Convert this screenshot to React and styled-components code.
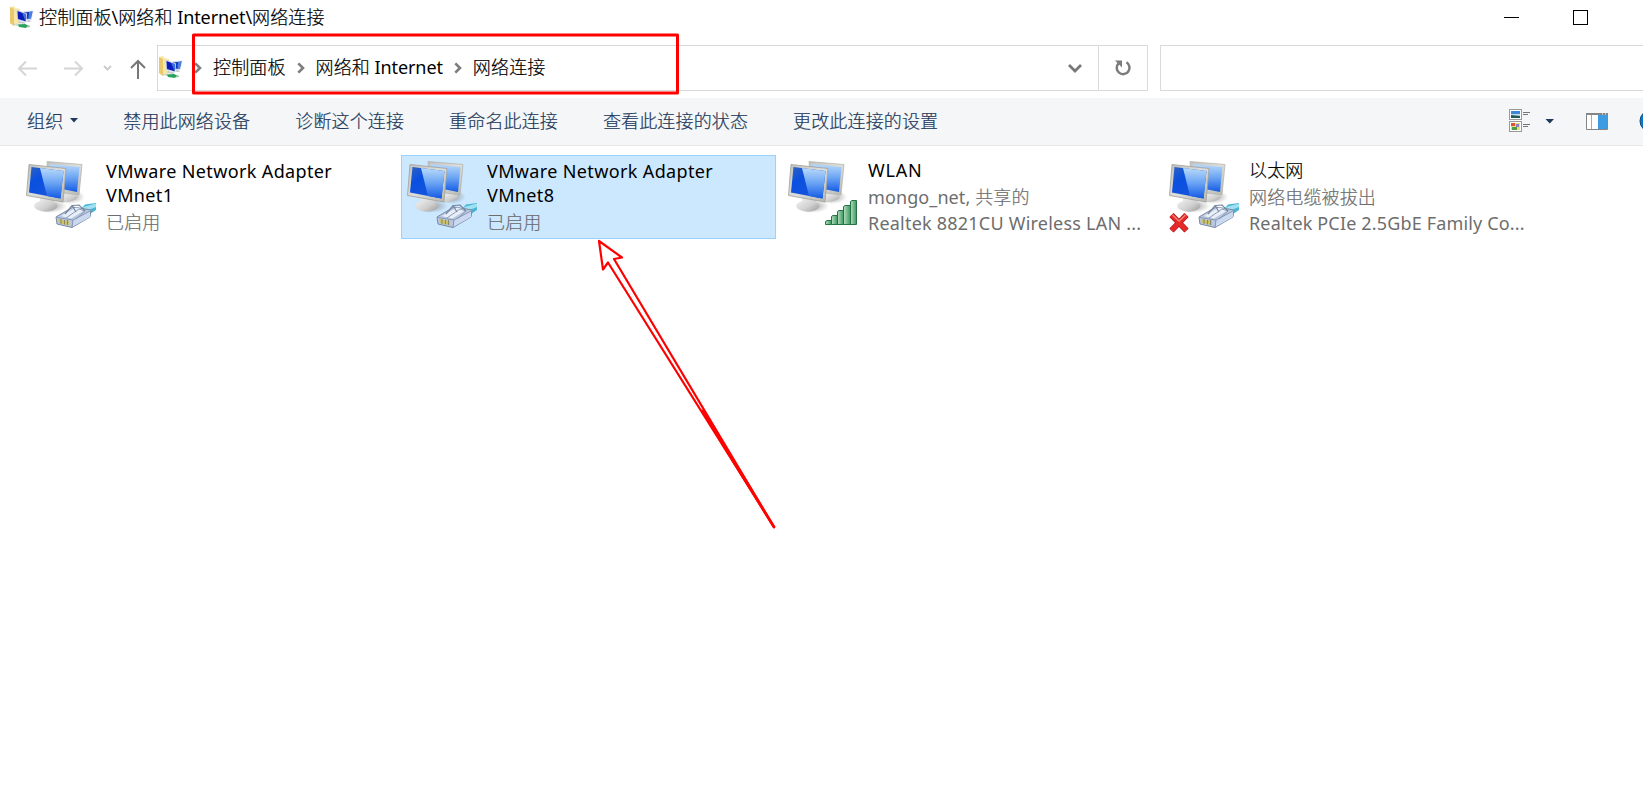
import React from 'react';
import styled, { createGlobalStyle, css } from 'styled-components';

const Global = createGlobalStyle`
  * { box-sizing: border-box; }
  html, body { margin: 0; background: #fff; overflow: hidden; }
  body { font-family: "Noto Sans", "Noto Sans CJK SC", sans-serif; font-size: 18px; color: #000; }
  svg { display: block; flex: none; }
`;

const Window = styled.div`
  position: relative;
  width: 1643px;
  height: 793px;
  overflow: hidden;
  background: #fff;
  white-space: nowrap;
`;

const TitleBar = styled.header`
  display: flex;
  align-items: center;
  height: 35px;
  padding: 0 55px 0 10px;
`;

const Label = styled.span`
  display: block;
  letter-spacing: ${p => p.$track || 0}px;
`;

const Han = styled.span`
  letter-spacing: 0.14px;
  font-family: "Noto Sans CJK SC", sans-serif;
  font-weight: 300;
  -webkit-text-stroke: 0.2px currentColor;
`;

const TitleText = styled.h1`
  flex: 1;
  margin: 0 0 0 5px;
  font-size: 18px;
  line-height: 32px;
  padding-bottom: 2px;
  font-weight: 400;
  letter-spacing: -0.1px;
`;

const WindowButtons = styled.div`
  display: flex;
  align-items: center;
  gap: 54px;
`;

const Minimize = styled.i`
  width: 15px;
  height: 1px;
  background: #000;
`;

const Maximize = styled.i`
  width: 15px;
  height: 15px;
  border: 1px solid #000;
`;

const NavRow = styled.nav`
  display: flex;
  height: 63px;
  padding: 10px 0 7px;
`;

const Arrows = styled.div`
  display: flex;
  flex: none;
  align-items: center;
  width: 157px;
`;

const AddressBar = styled.div`
  display: flex;
  flex: none;
  align-items: center;
  width: 991px;
  height: 46px;
  border: 1px solid #d9d9d9;
  padding-left: 1px;
`;

const Crumbs = styled.div`
  display: flex;
  flex: 1;
  align-items: center;
  line-height: 40px;
  padding-left: 11px;
`;

const Crumb = styled.span`
  margin: 0 11px;
  padding-bottom: 3px;
  letter-spacing: -0.1px;
`;

const Refresh = styled.div`
  display: flex;
  align-items: center;
  justify-content: center;
  width: 49px;
  height: 44px;
  margin-left: 15px;
  border-left: 1px solid #d9d9d9;
`;

const SearchBox = styled.div`
  width: 500px;
  flex: none;
  height: 46px;
  margin-left: 12px;
  border: 1px solid #d9d9d9;
`;

const CommandBar = styled.div`
  display: flex;
  align-items: flex-start;
  height: 48px;
  padding-left: 27px;
  background: #f4f6f8;
  border-bottom: 1px solid #e6e7e8;
  color: #1e395b;
`;

const Command = styled.span`
  display: flex;
  align-items: center;
  gap: 7px;
  margin-right: 45px;
  line-height: 45px;
`;

const ViewTools = styled.div`
  display: flex;
  flex: none;
  margin-left: auto;
`;

const Connections = styled.main`
  display: grid;
  grid-template-columns: repeat(4, 375px);
  column-gap: 6px;
  padding: 9px 0 0 20px;
`;

const Tile = styled.article`
  display: flex;
  height: 84px;
  padding: 0 0 0 4px;
  border: 1px solid transparent;
  ${p => p.$selected && css`
    background: #cce8ff;
    border-color: #99d1ff;
  `}
`;

const TileText = styled.div`
  width: 285px;
  margin-left: 10px;
  padding-top: ${p => (p.$wrapped ? 3 : p.$drop || 0)}px;
`;

const TileName = styled.div`
  line-height: ${p => (p.$wrapped ? 24 : 26)}px;
  padding-bottom: ${p => (p.$wrapped ? 1 : 0)}px;
  white-space: ${p => (p.$wrapped ? 'pre-line' : 'nowrap')};
`;

const TileDetail = styled.div`
  height: 26px;
  line-height: 26px;
  color: #6d6d6d;

  & + & {
    line-height: 28px;
  }
`;

const Annotations = styled.svg`
  position: absolute;
  left: 0;
  top: 0;
  pointer-events: none;
`;

const IconSlot = styled.div`
  padding-top: 4px;
`;

const Chevron = () => (
  <svg width="8" height="12" viewBox="0 0 8 12"><path d="M1.300 1.300 6 6 1.300 10.700" fill="none" stroke="#7d7d7d" strokeWidth="2.600" /></svg>
);

const Caret = () => (
  <svg width="8" height="5" viewBox="0 0 8 5"><path d="M0 0h8L4 4.600z" fill="#1e395b" /></svg>
);

const FolderIcon = () => (
  <svg width="24" height="24" viewBox="0 0 24 24">
    <path d="M0 1 4 0 5 2 10 3v14L4 20 0 17z" fill="#f8e6a3" />
    <path d="M0 1 4 3v17L0 17z" fill="#e8c970" />
    <path d="M13 5.500 23.500 4.500 21.500 14 14 14z" fill="#d5dcea" /><path d="M14 6.500 22.500 5.500 20.800 12.500 15 13z" fill="#1538bb" /><path d="M19 6 22.500 5.500 20.800 12.500 18.500 12.700z" fill="#4a82df" />
    <path d="M6.500 3.500 17 7.500 16.500 16.500 7 14z" fill="#cdd6ea" /><path d="M7.500 5 16 8.200 15.500 15.200 8 13z" fill="#0a1cb9" /><path d="M12 6.700 16 8.200 15.500 15.200z" fill="#3b75df" />
    <path d="M9 15l6 1.500v1.500l-7-1z" fill="#c5ccd2" /><path d="M17 14h3l1 2h-4z" fill="#c9d0da" />
    <path d="M4 17.500 12 18.500 19 19v1.500L12 21 4 19z" fill="#cbd9d2" /><path d="M8 18.500 15 18l3 1.500-2 2.500-7-1z" fill="#29a35a" /><path d="M17 20l3-.5v1.500l-3 .5z" fill="#93c8a5" />
  </svg>
);

const Plug = () => (
  <g>
    <path d="M55 50 60 44.500 71 43V50L62 56z" fill="#49b5d5" /><path d="M58 47 71 43.500V47L61 51z" fill="#9fe1f0" />
    <path d="M31 57 48 47 66 50 65 57 47 67.500 32 64z" fill="#b9c8e0" stroke="#7a8aa5" strokeWidth="1" />
    <path d="M36 56 51 47.500 60 50 46 58.500z" fill="#e8eff9" />
    <path d="M48 60 65 51V57L48 66.500z" fill="#cbd9f0" />
    <path d="M32 57.500 48 60 65 51M48 60 47 67M41 58l13-9 6 2-9 8" fill="none" stroke="#8292ad" strokeWidth=".9" />
    <path d="M40 54 47 45.500 54 45 60 51M47 45.500 51 52" fill="none" stroke="#77869e" strokeWidth="1.200" />
    <path d="M33 59 44 61V65.500L34 63z" fill="#cbc169" />
    <path d="M36 59v5M39.500 60v4.500M42.500 60v5" stroke="#777c67" strokeWidth=".8" />
  </g>
);

const Signal = () => (
  <g fill="url(#signal)" stroke="#237345" strokeWidth="1">
    <path d="M38.500 64.500V61.500L40 60.500H44.500V64.500z" /><path d="M44.500 64.500V56.500L46 55.500H50.500V64.500z" /><path d="M50.500 64.500V51.500L52 50.500H56.500V64.500z" /><path d="M56.500 64.500V46.500L58 45.500H63.500V64.500z" /><path d="M63.500 64.500V41.500L65 40.500H69.500V64.500z" />
  </g>
);

const MonitorIcon = ({ kind, unplugged }) => (
  <svg width="71" height="76" viewBox="0 0 71 76">
    <defs>
      <linearGradient id="screen" x1="0" y1="0" x2=".8" y2="1"><stop stopColor="#3162bd" /><stop offset=".35" stopColor="#0a50e0" /><stop offset="1" stopColor="#1a55dc" /></linearGradient>
      <linearGradient id="glare" x1="0" y1="0" x2="0" y2="1"><stop stopColor="#b9dafa" /><stop offset=".5" stopColor="#69a3f4" /><stop offset="1" stopColor="#145ae4" /></linearGradient>
      <linearGradient id="frame" x1="0" y1="0" x2="1" y2="1"><stop stopColor="#bfbfbb" /><stop offset=".5" stopColor="#dededa" /><stop offset="1" stopColor="#b5b5b0" /></linearGradient>
      <linearGradient id="stand" x1="0" y1="0" x2="1" y2="1"><stop stopColor="#fafafa" /><stop offset=".6" stopColor="#d0d0d0" /><stop offset="1" stopColor="#999" /></linearGradient>
      <linearGradient id="signal" x1="0" y1="0" x2="1" y2="0"><stop stopColor="#b4dfbe" /><stop offset="1" stopColor="#3b9660" /></linearGradient>
      <radialGradient id="shade"><stop stopColor="#777" stopOpacity=".7" /><stop offset="1" stopColor="#777" stopOpacity="0" /></radialGradient>
    </defs>
    <ellipse cx="45" cy="37" rx="15" ry="7" fill="url(#shade)" />
    <path d="M37 32 50 34 53 37Q49 43 35 42z" fill="url(#stand)" />
    <path d="M22 1.500 57 4.500 54 35 24 31z" fill="url(#frame)" stroke="#b0b0ab" strokeWidth=".7" />
    <path d="M24.500 4 54.500 7 52 32 27 27z" fill="url(#glare)" />
    <ellipse cx="25" cy="46" rx="17" ry="7" fill="url(#shade)" />
    <path d="M15 36 28 39 29 42Q36 46 29 50 20 54 11 49 6 44 15 41z" fill="url(#stand)" />
    <path d="M4 4.500 41 8.500 38 42 1.500 35.500z" fill="url(#frame)" stroke="#a0a09b" strokeWidth=".8" />
    <path d="M6.500 7 38.500 11 35.500 38.500 4 32.500z" fill="url(#screen)" /><path d="M15 8 38.500 11 35.500 38.500 22 36z" fill="url(#glare)" />
    {kind === 'signal' ? <Signal /> : <Plug />}
    {unplugged && <g><path d="M3.500 55 18.500 70.500M18.500 55 3.500 70.500" stroke="#b51a1b" strokeWidth="6" /><path d="M3.500 55 18.500 70.500M18.500 55 3.500 70.500" stroke="#e52b2a" strokeWidth="4.300" /><path d="M4.500 55 11 61 17.500 55" stroke="#f2857a" strokeWidth="1.300" fill="none" /></g>}
  </svg>
);

const Connection = ({ name, details, selected, wrapped, drop, track, tracks = [], kind, unplugged }) => (
  <Tile $selected={selected}>
    <IconSlot><MonitorIcon kind={kind} unplugged={unplugged} /></IconSlot>
    <TileText $wrapped={wrapped} $drop={drop}>
      <TileName $wrapped={wrapped}><Label $track={track}>{name}</Label></TileName>
      {details.map((d, i) => <TileDetail key={i}><Label $track={tracks[i]}>{d}</Label></TileDetail>)}
    </TileText>
  </Tile>
);

export default function App() {
  return (
    <>
      <Global />
      <Window>
        <TitleBar>
          <FolderIcon />
          <TitleText><Han>控制面板</Han>\<Han>网络和</Han> Internet\<Han>网络连接</Han></TitleText>
          <WindowButtons><Minimize /><Maximize /></WindowButtons>
        </TitleBar>
        <NavRow>
          <Arrows>
            <svg width="157" height="46" viewBox="0 0 157 46" fill="none">
              <path d="M37 23.500H19M26 16.500 19 23.500 26 30.500M64 23.500H82M75 16.500 82 23.500 75 30.500" stroke="#d5d5d5" strokeWidth="2" />
              <path d="M104 21 107.500 24.500 111 21" stroke="#cdcdcd" strokeWidth="2" />
              <path d="M138 34V16M131 23 138 16 145 23" stroke="#777" strokeWidth="2" />
            </svg>
          </Arrows>
          <AddressBar>
            <FolderIcon />
            <Crumbs>
              <Chevron /><Crumb><Han>控制面板</Han></Crumb>
              <Chevron /><Crumb><Han>网络和</Han> Internet</Crumb>
              <Chevron /><Crumb><Han>网络连接</Han></Crumb>
            </Crumbs>
            <svg width="16" height="12" viewBox="0 0 16 12"><path d="M2 3 8 9 14 3" fill="none" stroke="#777" strokeWidth="2.800" /></svg>
            <Refresh>
              <svg width="18" height="18" viewBox="0 0 18 18"><path d="M12.500 3.300A6.400 6.400 0 1 1 4.500 4.300" fill="none" stroke="#7b7b7b" strokeWidth="2.500" /><path d="M1 1.500H8V8.500z" fill="#7b7b7b" /></svg>
            </Refresh>
          </AddressBar>
          <SearchBox />
        </NavRow>
        <CommandBar>
          <Command><Han>组织</Han><Caret /></Command>
          <Command><Han>禁用此网络设备</Han></Command>
          <Command><Han>诊断这个连接</Han></Command>
          <Command><Han>重命名此连接</Han></Command>
          <Command><Han>查看此连接的状态</Han></Command>
          <Command><Han>更改此连接的设置</Han></Command>
          <ViewTools>
            <svg width="135" height="46" viewBox="0 0 135 46">
              <g fill="#fff" stroke="#999"><rect x="1.500" y="11.500" width="12" height="10" /><rect x="1.500" y="23.500" width="12" height="10" /></g>
              <path d="M3 13h9v3H3z" fill="#3f86d5" /><path d="M3 16h9v2H3z" fill="#c2dcec" /><path d="M3 17l9 1v2H3z" fill="#225a52" />
              <path d="M3 25h9v7H3z" fill="#f0de73" /><path d="M3 25h4v3H3z" fill="#d8572e" /><path d="M8 26h3v3H8z" fill="#8d7fc5" /><path d="M4 29h5v3H4z" fill="#4b9b4d" />
              <path d="M15 14.500h7M15 16.500h5M15 26.500h7M15 28.500h5" stroke="#777" />
              <path d="M37.500 21H46L41.750 25.500z" fill="#1e395b" />
              <path d="M78.500 15.500h21v16h-21z" fill="#fff" stroke="#858585" /><path d="M78 15h22v2H78z" fill="#858585" /><path d="M83.500 17v14" stroke="#aaa" /><path d="M90 17h9v14h-9z" fill="#3d9be4" />
              <path d="M94 16h1M97 16h1" stroke="#fff" />
              <circle cx="143" cy="23" r="11" fill="#0878cf" stroke="#164a75" />
            </svg>
          </ViewTools>
        </CommandBar>
        <Connections>
          <Connection wrapped track={0.36} name={'VMware Network Adapter\nVMnet1'} details={[<Han>已启用</Han>]} />
          <Connection wrapped selected track={0.36} name={'VMware Network Adapter\nVMnet8'} details={[<Han>已启用</Han>]} />
          <Connection kind="signal" drop={1} track={0.8} tracks={[0.1, 0.22]} name="WLAN" details={[<>mongo_net, <Han>共享的</Han></>, 'Realtek 8821CU Wireless LAN ...']} />
          <Connection unplugged tracks={[0, 0.16]} name={<Han>以太网</Han>} details={[<Han>网络电缆被拔出</Han>, 'Realtek PCIe 2.5GbE Family Co...']} />
        </Connections>
        <Annotations width="1643" height="793" fill="none" stroke="#f00">
          <rect x="193.500" y="35" width="484" height="58" strokeWidth="3" strokeLinejoin="round" />
          <path d="M774 527 614 259 622 257.500 599 241 603 269.500 608 262.500z" strokeWidth="2.200" strokeLinejoin="round" />
          <path d="M702.500 411 774 527" strokeWidth="2.800" strokeLinecap="round" />
        </Annotations>
      </Window>
    </>
  );
}
